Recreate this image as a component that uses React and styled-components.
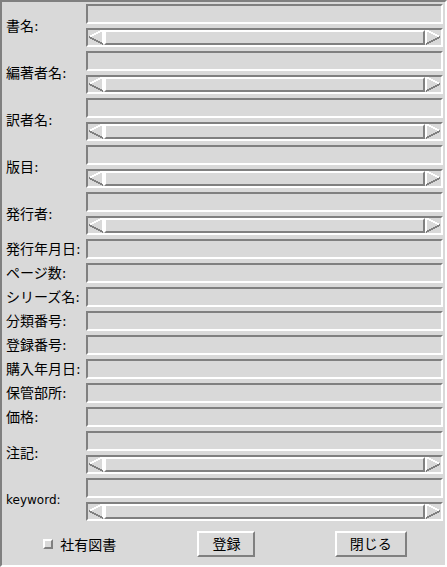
import React from 'react';
import styled, { createGlobalStyle, css } from 'styled-components';

const GRAY = '#d9d9d9';
const DARK = '#808080';
const LIGHT = '#ffffff';

const GlobalStyle = createGlobalStyle`
  html, body {
    margin: 0;
    padding: 0;
    background: ${GRAY};
  }
  body {
    font-family: "DejaVu Sans", "Noto Sans CJK JP", sans-serif;
    color: #000;
  }
`;

// Motif style 3D edges
const bevel = (inset) => css`
  border: 2px solid;
  border-color: ${inset
    ? `${DARK} ${LIGHT} ${LIGHT} ${DARK}`
    : `${LIGHT} ${DARK} ${DARK} ${LIGHT}`};
`;

const Window = styled.div`
  box-sizing: border-box;
  width: 447px;
  height: 567px;
  ${bevel(true)}
  background: ${GRAY};
  padding: 2px 2px 0 0;
  display: flex;
  flex-direction: column;
  gap: 4px;
`;

const Row = styled.div`
  display: grid;
  grid-template-columns: 84px 1fr;
  align-items: center;
`;

const Label = styled.span`
  padding-left: 4px;
  font-size: ${(p) => p.$size || 14}px;
  line-height: 1;
  white-space: nowrap;
`;

const Stack = styled.div`
  display: flex;
  flex-direction: column;
  gap: 4px;
`;

const Field = styled.input`
  box-sizing: border-box;
  display: block;
  width: 100%;
  height: 20px;
  margin: 0;
  padding: 0 3px;
  ${bevel(true)}
  background: ${GRAY};
  font: inherit;
  font-size: 14px;
  outline: none;
`;

const Trough = styled.div`
  box-sizing: border-box;
  height: 19px;
  ${bevel(true)}
  background: ${GRAY};
  display: flex;
`;

const Thumb = styled.div`
  flex: 1;
  box-sizing: border-box;
  ${bevel(false)}
  background: ${GRAY};
`;

const ArrowSvg = styled.svg`
  flex: none;
  display: block;
`;

const Arrow = ({ dir }) => {
  const left = dir === 'left';
  const tip = left ? '1,7' : '15,7';
  const top = left ? '15,0' : '1,0';
  const bot = left ? '15,14' : '1,14';
  return (
    <ArrowSvg width="16" height="15" viewBox="0 0 16 15" shapeRendering="crispEdges">
      <polygon points={`${tip} ${top} ${bot}`} fill={GRAY} />
      <polyline points={`${tip} ${top} ${bot}`} fill="none" stroke={LIGHT} strokeWidth="1.5" />
      <line
        x1={left ? 1 : 15} y1="7" x2={left ? 15 : 1} y2="14"
        stroke={DARK} strokeWidth="1.5"
      />
    </ArrowSvg>
  );
};

const ScrollBar = () => (
  <Trough>
    <Arrow dir="left" />
    <Thumb />
    <Arrow dir="right" />
  </Trough>
);

const Footer = styled.div`
  display: grid;
  grid-template-columns: repeat(3, 1fr);
  align-items: center;
  justify-items: center;
  padding: 6px 0 0 8px;
`;

const CheckRow = styled.label`
  display: flex;
  align-items: center;
  gap: 7px;
  padding-right: 5px;
  font-size: 14px;
`;

const CheckBox = styled.span`
  box-sizing: border-box;
  width: 10px;
  height: 10px;
  ${bevel(false)}
  background: ${GRAY};
`;

const Button = styled.button`
  box-sizing: border-box;
  height: 26px;
  padding: 0 13px;
  margin: 0;
  ${bevel(false)}
  background: ${GRAY};
  font: inherit;
  font-size: 14px;
  line-height: 1;
  color: #000;
`;

const fields = [
  { label: '書名:', multi: true },
  { label: '編著者名:', multi: true },
  { label: '訳者名:', multi: true },
  { label: '版目:', multi: true },
  { label: '発行者:', multi: true },
  { label: '発行年月日:' },
  { label: 'ページ数:' },
  { label: 'シリーズ名:' },
  { label: '分類番号:' },
  { label: '登録番号:' },
  { label: '購入年月日:' },
  { label: '保管部所:' },
  { label: '価格:' },
  { label: '注記:', multi: true },
  { label: 'keyword:', multi: true, size: 12 },
];

const App = () => (
  <>
    <GlobalStyle />
    <Window>
      {fields.map((f) => (
        <Row key={f.label}>
          <Label $size={f.size}>{f.label}</Label>
          {f.multi ? (
            <Stack>
              <Field />
              <ScrollBar />
            </Stack>
          ) : (
            <Field />
          )}
        </Row>
      ))}
      <Footer>
        <CheckRow>
          <CheckBox />
          社有図書
        </CheckRow>
        <Button>登録</Button>
        <Button>閉じる</Button>
      </Footer>
    </Window>
  </>
);

export default App;
